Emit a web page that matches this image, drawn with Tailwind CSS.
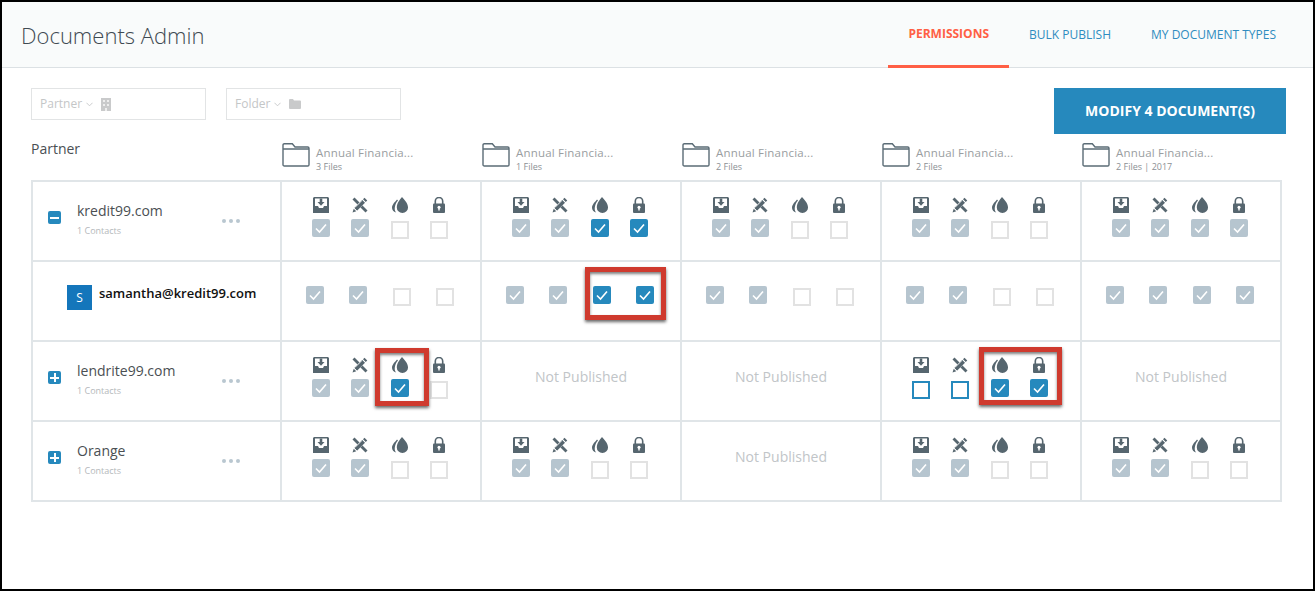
<!DOCTYPE html>
<html lang="en">
<head>
    <meta charset="UTF-8">
    <meta name="viewport" content="width=device-width, initial-scale=1.0">
    <title>Documents Admin</title>
    <script src="https://cdn.jsdelivr.net/npm/@tailwindcss/browser@4"></script>
</head>
<body class="bg-white">
    <!-- Icon sprites -->
    <svg class="hidden">
        <symbol id="i-download" viewBox="0 0 16 16">
            <path fill="#56666f" d="M1 0h14l1 1v15H0V1z"/>
            <path fill="#fff" d="M2 1.500h12V9h-3l-1 2H6L5 9H2z"/>
            <path fill="#56666f" d="M6.700 1.500h2.600V5h2.200L8 8.800 4.500 5h2.200z"/>
        </symbol>
        <symbol id="i-pencil" viewBox="0 0 32 32">
            <path fill="#56666f" d="M1 5 5 1 31 27 27 31z"/>
            <path fill="#fff" d="M11 15 15 11 21 17 17 21z"/>
            <path fill="#56666f" d="M25 1.500 30.500 7 27.500 10 22 4.500z"/>
            <path fill="#56666f" d="M20.500 6 26 11.500 10 27.500 4.500 22z"/>
            <path fill="#56666f" d="M3.500 23.500 8.500 28.500 1 31z"/>
            <path fill="none" stroke="#fff" stroke-width="1.400" d="M21 5 27 11M4 22 10 28M19 8 6 21"/>
        </symbol>
        <symbol id="i-drop" viewBox="0 0 16 16">
            <path fill="#56666f" d="M10 0c2 2.500 6 6 6 10.200A5.600 5.600 0 0 1 10.400 16 5.600 5.600 0 0 1 4.800 10.200C4.800 6 8 2.500 10 0z"/>
            <path fill="#56666f" d="M5 2.500C3 5 0 7.500 0 10.800 0 13 1.500 15 4 15.500 2.500 13.500 2.500 11.500 3 9.500 3.300 7.500 4.500 5 6 3.500z"/>
        </symbol>
        <symbol id="i-lock" viewBox="0 0 12 16">
            <path fill="none" stroke="#56666f" stroke-width="1.600" d="M2.300 7V4.200a3.700 3.700 0 0 1 7.400 0V7"/>
            <rect y="6.500" width="12" height="9.500" rx="1" fill="#56666f"/>
            <circle cx="6" cy="10.200" r="1.500" fill="#fff"/>
            <rect x="5.300" y="10.500" width="1.400" height="3" fill="#fff"/>
        </symbol>
        <symbol id="i-check" viewBox="0 0 18 18">
            <path fill="none" stroke="#fff" stroke-width="1.600" d="M4 9.500 7.500 13 14 5.500"/>
        </symbol>
        <symbol id="i-folder" viewBox="0 0 28 24">
            <path fill="none" stroke="#5b6c76" stroke-width="1.400" d="M1 6V2a1.300 1.300 0 0 1 1.300-1.300h8L13 4h12.700A1.300 1.300 0 0 1 27 5.300V21.700a1.300 1.300 0 0 1-1.300 1.300H2.300A1.300 1.300 0 0 1 1 21.700V6h26"/>
        </symbol>
    </svg>

    <div class="w-[1315px] h-[591px] border-2 border-black overflow-hidden text-[#4a4f53]" style="font-family: 'Open Sans', sans-serif">
        <!-- Header -->
        <header class="h-[66px] bg-[#f9fbfb] border-b border-[#dce1e4] flex items-stretch justify-between pl-[19px] pr-[17px]">
            <h1 class="text-[22px] font-light text-[#3f4a52] leading-[67px]">Documents Admin</h1>
            <nav class="flex text-xs text-[#2f8cc0]">
                <a class="px-5 border-b-[3px] border-[#ff5f45] font-bold text-[#ff5f45] leading-[64px] -mb-px">PERMISSIONS</a>
                <a class="px-5 leading-[66px]">BULK PUBLISH</a>
                <a class="px-5 leading-[66px]">MY DOCUMENT TYPES</a>
            </nav>
        </header>

        <main class="pl-[29px] pr-[27px]">
            <!-- Filters -->
            <div class="flex justify-between items-start pt-5 h-[66px]">
                <div class="flex gap-5">
                    <div class="w-[175px] h-8 border border-[#e2e4e5] flex items-center pl-2 text-xs text-[#c4c6c7]">
                        Partner
                        <svg class="w-[7px] h-[5px] ml-1 mr-[2px] mt-px" viewBox="0 0 8 5"><path fill="none" stroke="#c4c6c7" d="M.5.5 4 4 7.500.5"/></svg>
                        <svg class="w-[10px] h-[13px] ml-[6px]" viewBox="0 0 10 13"><path fill="#c9cacb" d="M0 0h10v13H0z"/><path fill="#eee" d="M2 2h2v2H2zM6 2h2v2H6zM2 6h2v2H2zM6 6h2v2H6zM4 10h2v3H4z"/></svg>
                    </div>
                    <div class="w-[175px] h-8 border border-[#e2e4e5] flex items-center pl-2 text-xs text-[#c4c6c7]">
                        Folder
                        <svg class="w-[7px] h-[5px] ml-1 mr-[2px] mt-px" viewBox="0 0 8 5"><path fill="none" stroke="#c4c6c7" d="M.5.5 4 4 7.500.5"/></svg>
                        <svg class="w-[12px] h-[10px] ml-[6px]" viewBox="0 0 12 10"><path fill="#c9cacb" d="M0 1a1 1 0 0 1 1-1h3l1 1.500h6a1 1 0 0 1 1 1V9a1 1 0 0 1-1 1H1a1 1 0 0 1-1-1z"/></svg>
                    </div>
                </div>
                <button class="w-[232px] h-[46px] bg-[#2689bd] text-white text-sm font-bold">MODIFY 4 DOCUMENT(S)</button>
            </div>

            <!-- Column headers -->
            <div class="grid grid-cols-[250px_repeat(5,200px)] h-[46px]" id="heads"></div>

            <!-- Table -->
            <div class="relative w-[1250px]">
                <div class="grid grid-cols-[249px_repeat(5,200px)] auto-rows-[80px] w-max border border-[#e0e5e8]" id="grid"></div>
                <!-- Red callouts -->
                <div class="absolute left-[554px] top-[87px] w-[81px] h-[53px] border-[5px] border-[#cf3a2e] shadow-[0_2px_3px_rgba(0,0,0,0.6),inset_0_2px_3px_rgba(0,0,0,0.5)]"></div>
                <div class="absolute left-[344px] top-[168px] w-[54px] h-[58px] border-[5px] border-[#cf3a2e] shadow-[0_2px_3px_rgba(0,0,0,0.6),inset_0_2px_3px_rgba(0,0,0,0.5)]"></div>
                <div class="absolute left-[948px] top-[167px] w-[83px] h-[58px] border-[5px] border-[#cf3a2e] shadow-[0_2px_3px_rgba(0,0,0,0.6),inset_0_2px_3px_rgba(0,0,0,0.5)]"></div>
            </div>
        </main>
    </div>

    <script>
        const ICONS = [
            '<svg class="w-4 h-4 shrink-0"><use href="#i-download"/></svg>',
            '<svg class="w-4 h-4 shrink-0"><use href="#i-pencil"/></svg>',
            '<svg class="w-4 h-4 shrink-0"><use href="#i-drop"/></svg>',
            '<svg class="w-3 h-4 shrink-0"><use href="#i-lock"/></svg>'
        ];
        const BOXES = {
            g: '<div class="w-[18px] h-[18px] rounded-[2px] bg-[#b6c5cf]"><svg class="w-[18px] h-[18px]"><use href="#i-check"/></svg></div>',
            b: '<div class="w-[18px] h-[18px] rounded-[2px] bg-[#2689bd]"><svg class="w-[18px] h-[18px]"><use href="#i-check"/></svg></div>',
            u: '<div class="w-[18px] h-[18px] mt-[2px] border-2 border-[#e2e2e2] bg-white"></div>',
            o: '<div class="w-[18px] h-[18px] mt-[2px] border-2 border-[#2689bd] bg-white"></div>'
        };

        // one row per partner, one string per folder, null = not published
        const ROWS = [
            { name: 'kredit99.com', open: true, cells: ['gguu', 'ggbb', 'gguu', 'gguu', 'gggg'] },
            { contact: 'samantha@kredit99.com', cells: ['gguu', 'ggbb', 'gguu', 'gguu', 'gggg'] },
            { name: 'lendrite99.com', cells: ['ggbu', null, null, 'oobb', null] },
            { name: 'Orange', cells: ['gguu', 'gguu', null, 'gguu', 'gguu'] }
        ];
        const FILES = ['3 Files', '1 Files', '2 Files', '2 Files', '2 Files | 2017'];

        document.getElementById('heads').innerHTML =
            '<div class="text-sm text-[#4a4f53] pt-[5px]">Partner</div>' +
            FILES.map(f => `
                <div class="flex items-start pt-[9px] pl-px gap-[6px]">
                    <svg class="w-7 h-6 shrink-0"><use href="#i-folder"/></svg>
                    <div class="text-[#9a9ea1]">
                        <div class="text-[11.5px] leading-[14px] pt-[3px] tracking-[0.2px]">Annual Financia...</div>
                        <div class="text-[9px] leading-[12px] mt-px text-[#8b9094]">${f}</div>
                    </div>
                </div>`).join('');

        function partnerCell(r) {
            if (r.contact) {
                return `<div class="border border-[#e0e5e8] flex items-start pl-[34px] pt-[23px] gap-[7px]">
                    <div class="w-[25px] h-[25px] bg-[#1476bb] text-white text-xs flex items-center justify-center">S</div>
                    <div class="text-[13px] font-semibold text-[#111] leading-[16px]">${r.contact}</div>
                </div>`;
            }
            return `<div class="border border-[#e0e5e8] flex items-start pl-[15px] pt-5 pr-10">
                <div class="relative w-[13px] h-[13px] mt-[9px] mr-4 rounded-[2px] bg-[#2689bd] flex items-center justify-center shrink-0">
                    <div class="w-[9px] h-[2px] bg-white"></div>
                    ${r.open ? '' : '<div class="absolute w-[2px] h-[9px] bg-white"></div>'}
                </div>
                <div class="flex-1">
                    <div class="text-sm leading-[18px] text-[#4a4f53]">${r.name}</div>
                    <div class="text-[9px] leading-[12px] mt-[5px] text-[#b4b8bb]">1 Contacts</div>
                </div>
                <div class="flex gap-[3px] mt-[17px]">
                    <div class="w-1 h-1 rounded-full bg-[#b9c7d0]"></div>
                    <div class="w-1 h-1 rounded-full bg-[#b9c7d0]"></div>
                    <div class="w-1 h-1 rounded-full bg-[#b9c7d0]"></div>
                </div>
            </div>`;
        }

        function permCell(cell, isContact) {
            if (cell === null) {
                return '<div class="border border-[#e0e5e8] flex items-center justify-center pb-2 text-sm text-[#c1c5c8]">Not Published</div>';
            }
            const boxes = [...cell].map(c => BOXES[c]);
            if (isContact) {
                return `<div class="border border-[#e0e5e8] pl-6 pt-6">
                    <div class="grid grid-cols-[43px_44px_43px_18px] items-start">${boxes.join('')}</div>
                </div>`;
            }
            return `<div class="border border-[#e0e5e8] pl-[30px] pt-[15px]">
                <div class="grid grid-cols-[39px_40px_39px_18px] grid-rows-[22px_auto] items-start">
                    ${ICONS.map(i => `<div class="w-[18px] flex justify-center">${i}</div>`).join('')}
                    ${boxes.join('')}
                </div>
            </div>`;
        }

        document.getElementById('grid').innerHTML = ROWS.map(r =>
            partnerCell(r) + r.cells.map(c => permCell(c, !!r.contact)).join('')
        ).join('');
    </script>
</body>
</html>
